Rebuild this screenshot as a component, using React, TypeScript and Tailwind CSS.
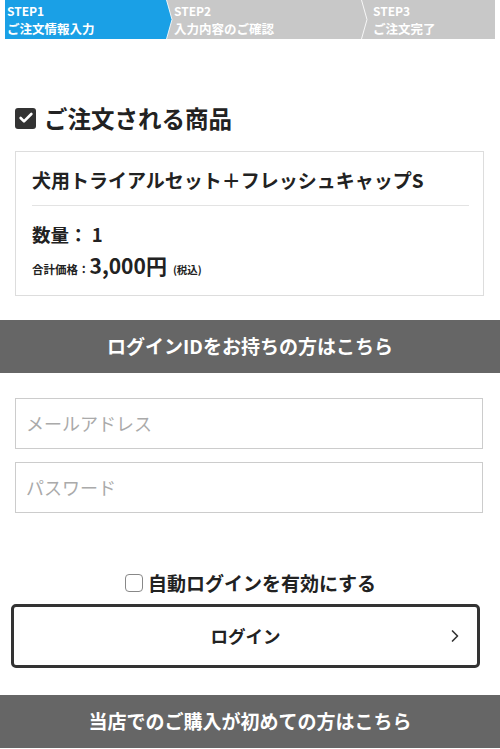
import { Check, ChevronRight } from 'lucide-react'

const FONT = '"Noto Sans CJK JP", "Noto Sans", sans-serif'

function Separator({ left, right }: { left: string; right: string }) {
  return (
    <svg width="10" height="39" viewBox="0 0 10 39" className="block shrink-0">
      <rect x="0" y="0" width="10" height="39" fill={right} />
      <polygon points="0,0 3.5,0 9,19.5 3.5,39 0,39" fill={left} />
      <polyline points="3.5,0 9,19.5 3.5,39" fill="none" stroke="#ffffff" strokeOpacity="0.85" strokeWidth="1" />
    </svg>
  )
}

function StepBar() {
  return (
    <div className="mx-[5px] flex h-[39px] text-white">
      <div className="w-[158px] bg-[#1aa0e6] pl-[2px] pt-[2px]">
        <div className="text-[12px] font-bold leading-[17px]">STEP1</div>
        <div className="text-[12.5px] font-bold leading-[19px]">ご注文情報入力</div>
      </div>
      <Separator left="#1aa0e6" right="#c8c8c8" />
      <div className="w-[185px] bg-[#c8c8c8] pl-[1px] pt-[2px]">
        <div className="text-[12px] font-bold leading-[17px]">STEP2</div>
        <div className="text-[12.5px] font-bold leading-[19px]">入力内容のご確認</div>
      </div>
      <Separator left="#c8c8c8" right="#c8c8c8" />
      <div className="flex-1 bg-[#c8c8c8] pl-[5px] pt-[2px]">
        <div className="text-[12px] font-bold leading-[17px]">STEP3</div>
        <div className="text-[12.5px] font-bold leading-[19px]">ご注文完了</div>
      </div>
    </div>
  )
}

function Band({ children }: { children: string }) {
  return (
    <div className="flex h-[53px] items-center justify-center bg-[#666666] text-[19px] font-bold text-white">
      {children}
    </div>
  )
}

export default function App() {
  return (
    <div className="min-h-[749px] overflow-hidden bg-white text-[#222]" style={{ fontFamily: FONT }}>
      <StepBar />

      <div className="ml-[15px] mt-[65px] flex h-[28px] items-center gap-[8px]">
        <span className="flex h-[21px] w-[21px] items-center justify-center rounded-[3px] bg-[#333]">
          <Check size={16} strokeWidth={4} color="#fff" />
        </span>
        <span className="text-[23.5px] font-bold leading-[28px]">ご注文される商品</span>
      </div>

      <div className="ml-[15px] mr-[16px] mt-[19px] border border-[#dddddd] pb-[10px] pt-[15px]">
        <div className="px-[16px] text-[19px] font-semibold leading-[26px]">犬用トライアルセット＋フレッシュキャップS</div>
        <div className="ml-[16px] mr-[14px] mt-[12px] border-t border-[#e3e3e3]" />
        <div className="mt-[15px] px-[16px] text-[18.5px] font-bold leading-[26px]">数量： 1</div>
        <div className="mt-[3px] flex items-baseline px-[16px] leading-[30px]">
          <span className="text-[11.5px] font-semibold">合計価格：</span>
          <span className="text-[21px] font-semibold">3,000円</span>
          <span className="ml-[6px] text-[10.5px] font-semibold">(税込)</span>
        </div>
      </div>

      <div className="mt-[24px]">
        <Band>ログインIDをお持ちの方はこちら</Band>
      </div>

      <div className="ml-[15px] mr-[17px] mt-[25px] flex h-[51px] items-center border border-[#cccccc] px-[10px] text-[18px] text-[#aaaaaa]">
        メールアドレス
      </div>
      <div className="ml-[15px] mr-[17px] mt-[13px] flex h-[51px] items-center border border-[#cccccc] px-[10px] text-[18px] text-[#aaaaaa]">
        パスワード
      </div>

      <div className="mt-[57px] flex h-[26px] items-center justify-center gap-[5px] pl-[1px]">
        <span className="h-[18px] w-[18px] rounded-[4px] border-[1.5px] border-[#888888]" />
        <span className="text-[19px] font-semibold leading-[26px]">自動ログインを有効にする</span>
      </div>

      <div className="relative ml-[11px] mt-[8px] flex h-[64px] w-[469px] items-center justify-center rounded-[5px] border-[3px] border-[#333333]">
        <span className="text-[17.5px] font-bold">ログイン</span>
        <ChevronRight size={20} strokeWidth={2} className="absolute right-[12px] text-[#333]" />
      </div>

      <div className="mt-[27px]">
        <Band>当店でのご購入が初めての方はこちら</Band>
      </div>
    </div>
  )
}
